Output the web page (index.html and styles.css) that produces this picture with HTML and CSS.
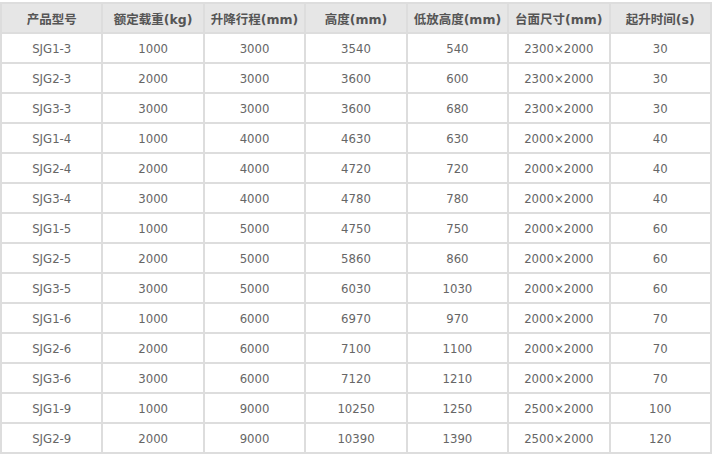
FILE: index.html
```html
<!DOCTYPE html>
<html>
<head>
<meta charset="utf-8">
<link rel="stylesheet" href="styles.css">
</head>
<body>
<table class="spec">
<thead>
<tr><th>产品型号</th><th>额定载重(kg)</th><th>升降行程(mm)</th><th>高度(mm)</th><th>低放高度(mm)</th><th>台面尺寸(mm)</th><th>起升时间(s)</th></tr>
</thead>
<tbody>
<tr><td>SJG1-3</td><td>1000</td><td>3000</td><td>3540</td><td>540</td><td>2300×2000</td><td>30</td></tr>
<tr><td>SJG2-3</td><td>2000</td><td>3000</td><td>3600</td><td>600</td><td>2300×2000</td><td>30</td></tr>
<tr><td>SJG3-3</td><td>3000</td><td>3000</td><td>3600</td><td>680</td><td>2300×2000</td><td>30</td></tr>
<tr><td>SJG1-4</td><td>1000</td><td>4000</td><td>4630</td><td>630</td><td>2000×2000</td><td>40</td></tr>
<tr><td>SJG2-4</td><td>2000</td><td>4000</td><td>4720</td><td>720</td><td>2000×2000</td><td>40</td></tr>
<tr><td>SJG3-4</td><td>3000</td><td>4000</td><td>4780</td><td>780</td><td>2000×2000</td><td>40</td></tr>
<tr><td>SJG1-5</td><td>1000</td><td>5000</td><td>4750</td><td>750</td><td>2000×2000</td><td>60</td></tr>
<tr><td>SJG2-5</td><td>2000</td><td>5000</td><td>5860</td><td>860</td><td>2000×2000</td><td>60</td></tr>
<tr><td>SJG3-5</td><td>3000</td><td>5000</td><td>6030</td><td>1030</td><td>2000×2000</td><td>60</td></tr>
<tr><td>SJG1-6</td><td>1000</td><td>6000</td><td>6970</td><td>970</td><td>2000×2000</td><td>70</td></tr>
<tr><td>SJG2-6</td><td>2000</td><td>6000</td><td>7100</td><td>1100</td><td>2000×2000</td><td>70</td></tr>
<tr><td>SJG3-6</td><td>3000</td><td>6000</td><td>7120</td><td>1210</td><td>2000×2000</td><td>70</td></tr>
<tr><td>SJG1-9</td><td>1000</td><td>9000</td><td>10250</td><td>1250</td><td>2500×2000</td><td>100</td></tr>
<tr><td>SJG2-9</td><td>2000</td><td>9000</td><td>10390</td><td>1390</td><td>2500×2000</td><td>120</td></tr>
</tbody>
</table>
</body>
</html>
```
FILE: styles.css
```css
html, body {
  margin: 0;
  padding: 0;
  background: #fff;
}
body {
  padding-top: 2px;
}
.spec {
  width: 712px;
  border-collapse: collapse;
  table-layout: fixed;
  font-family: "DejaVu Sans Condensed", "Noto Sans CJK SC", sans-serif;
  font-size: 13px;
  color: #666;
}
.spec th,
.spec td {
  border: 2px solid #dddddd;
  height: 28px;
  padding: 0;
  text-align: center;
  vertical-align: middle;
  white-space: nowrap;
}
.spec th {
  background: #e6e6e6;
  color: #555;
  font-weight: bold;
  font-family: "DejaVu Sans", "Noto Sans CJK SC", sans-serif;
  font-size: 12.5px;
}
```
